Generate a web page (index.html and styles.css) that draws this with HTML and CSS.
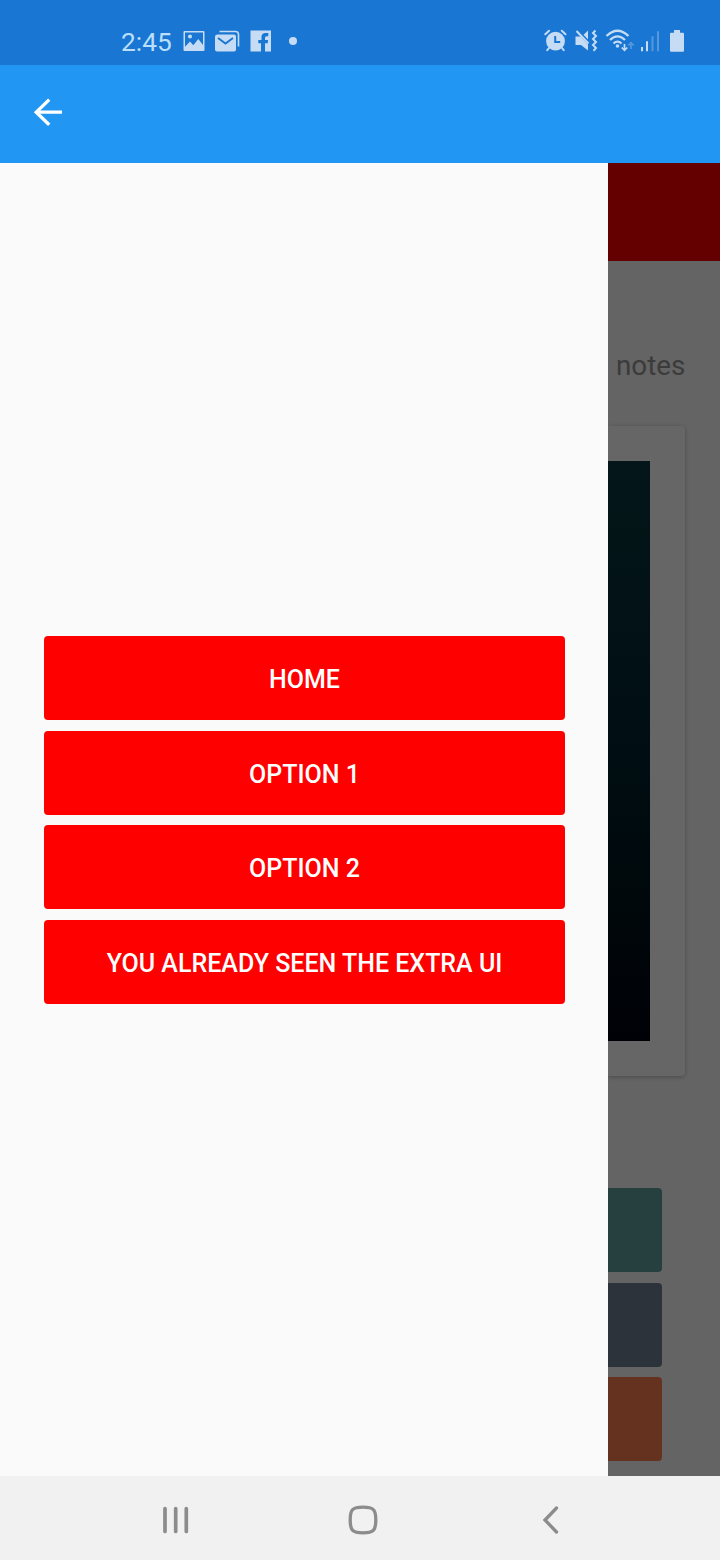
FILE: index.html
```html
<!DOCTYPE html>
<html lang="en">
<head>
<meta charset="utf-8">
<meta name="viewport" content="width=device-width, initial-scale=1">
<title>Menu</title>
<link rel="stylesheet" href="styles.css">
</head>
<body>
<div class="screen">
  <header class="status">
    <div class="status-left">
      <span class="clock">2:45</span>
      <svg class="icon" width="22" height="22" viewBox="0 0 22 22"><path fill="currentColor" fill-rule="evenodd" d="M1.500 1h19q1 0 1 1v18q0 1-1 1h-19q-1 0-1-1V2q0-1 1-1zM2 2.500v14.200l5-5.200 3.300 3.700 5-6.200 4.700 6V2.500zM7 4.600a2 2 0 1 1 0 4a2 2 0 1 1 0-4z"/></svg>
      <svg class="icon" width="25" height="22" viewBox="0 0 25 22"><path fill="currentColor" d="M2.500 4.500h16.500q2 0 2 2v13q0 2-2 2h-17q-2 0-2-2v-13q0-2 2.500-2z"/><path fill="none" stroke="currentColor" stroke-width="1.600" d="M4.500 1.500H20.500q3 0 3 3V16.500"/><path fill="none" stroke="#1976d2" stroke-width="1.900" d="M3 8l7.500 5.500L18 8"/></svg>
      <svg class="icon" width="21" height="22" viewBox="0 0 21 22"><path fill="currentColor" fill-rule="evenodd" d="M.5 .5h20.500v21h-6v-8.300h2.700l.4-3.200h-3.100V7.800q0-1.500 1.500-1.500h1.800V3h-2.500q-4.300 0-4.300 4v3H8.300v3.200h2.700v8.300H.5z"/></svg>
      <span class="dot"></span>
    </div>
    <div class="status-right">
      <svg class="icon" width="24" height="24" viewBox="0 0 24 24"><path fill="currentColor" fill-rule="evenodd" d="M11.500 2.800a9.400 9.400 0 1 1 0 18.800a9.400 9.400 0 1 1 0-18.800zM10.200 7v7h6v-1.900h-4V7z"/><path fill="none" stroke="currentColor" stroke-width="2" stroke-linecap="round" d="M1.300 5.200l3.700-3.400M21.500 5.200l-3.700-3.400M5 19l-1.700 2.200M18 19l1.700 2.200"/></svg>
      <svg class="icon" width="24" height="24" viewBox="0 0 24 24"><path fill="currentColor" d="M.5 7.500h5l7.500 8v6L6 16H.5zM13 1.500v9L8.500 5.800z"/><path fill="none" stroke="currentColor" stroke-width="2" d="M1.500 2l12 12.500M20.500 1.500l-2.500 2.500 3 3-3 3 3 3-3 3 3 3-2.500 2.800"/></svg>
      <svg class="icon wifi" width="30" height="24" viewBox="0 0 30 24"><path fill="none" stroke="currentColor" stroke-width="2.300" d="M1.500 7Q12.500-3.500 23.500 7M5 11Q12.500 3.800 20 11M8.500 14.500Q12.500 10.800 16.500 14.500"/><circle fill="currentColor" cx="12.500" cy="17" r="1.800"/><path fill="none" stroke="currentColor" stroke-width="1.700" d="M19.500 15v6.500M16.700 18.500l2.800 2.900 2.800-2.900"/><path class="faded" fill="none" stroke="currentColor" stroke-width="1.700" d="M26 20v-6.500M23.200 16.500l2.800-2.900 2.800 2.900"/></svg>
      <svg class="icon signal" width="20" height="24" viewBox="0 0 20 24"><path fill="currentColor" d="M1 18h2v4.300H1zM6 12.300h2v10H6z"/><path class="faded" fill="currentColor" d="M11.500 7.300h2v15h-2zM17 2.300h2v20h-2z"/></svg>
      <svg class="icon" width="14" height="24" viewBox="0 0 14 24"><path fill="currentColor" d="M4 1h6v2.700h3q1 0 1 1v17q0 1-1 1H1q-1 0-1-1v-17q0-1 1-1h3z"/></svg>
    </div>
  </header>
  <div class="appbar">
    <svg class="back" width="30" height="30" viewBox="0 0 30 30"><path fill="none" stroke="currentColor" stroke-width="3.300" d="M29 15.200H4M16.200 2.600L3.200 15.200l13 12.600"/></svg>
  </div>
  <main class="body">
    <nav class="drawer">
      <button class="option">HOME</button>
      <button class="option">OPTION 1</button>
      <button class="option">OPTION 2</button>
      <button class="option">YOU ALREADY SEEN THE EXTRA UI</button>
    </nav>
    <section class="page">
      <div class="page-bar"></div>
      <p class="page-text">notes</p>
      <div class="card"><div class="picture"></div></div>
      <div class="tiles">
        <div class="tile teal"></div>
        <div class="tile slate"></div>
        <div class="tile rust"></div>
      </div>
    </section>
  </main>
  <footer class="navbar">
    <svg class="nav-recent" width="26" height="28" viewBox="0 0 26 28"><path fill="none" stroke="currentColor" stroke-width="3.700" stroke-linecap="round" d="M2 2.500v23M12.700 2.500v23M23.300 2.500v23"/></svg>
    <svg class="nav-home" width="30" height="30" viewBox="0 0 30 30"><path fill="none" stroke="currentColor" stroke-width="3.300" d="M15 2.200C25.500 2.200 27.800 4.500 27.800 15S25.500 27.800 15 27.800 2.200 25.500 2.200 15 4.500 2.200 15 2.200z"/></svg>
    <svg class="nav-back" width="18" height="28" viewBox="0 0 18 28"><path fill="none" stroke="currentColor" stroke-width="3.300" stroke-linecap="round" d="M14.500 2L3 14l11.500 12"/></svg>
  </footer>
</div>
</body>
</html>
```

FILE: styles.css
```css
* {
  box-sizing: border-box;
}

body {
  margin: 0;
  font-family: Roboto, "Noto Sans", sans-serif;
}

.screen {
  display: flex;
  flex-direction: column;
  width: 720px;
  height: 1560px;
  overflow: hidden;
}

svg {
  display: block;
  flex: none;
}

.status {
  display: flex;
  justify-content: space-between;
  height: 65px;
  padding: 29px 36px 0 121px;
  background: #1976d2;
  color: #c5dcf4;
}

.status-left,
.status-right {
  display: flex;
  align-items: center;
  height: 24px;
}

.status-left {
  gap: 10px;
}

.clock {
  width: 52px;
  padding-top: 2px;
  font-size: 26.3px;
  line-height: 26px;
  color: #bbdefb;
}

.dot {
  width: 8px;
  height: 8px;
  margin-left: 8px;
  border-radius: 50%;
  background: currentColor;
}

.status-right {
  gap: 7px;
}

.wifi {
  margin-left: -1px;
}

.signal {
  margin: 0 3px 0 -2px;
}

.faded {
  opacity: 0.35;
}

.appbar {
  display: flex;
  height: 98px;
  padding: 32px 33px 0;
  background: #2196f3;
  color: #fff;
}

.body {
  display: flex;
  height: 1313px;
}

.drawer {
  display: flex;
  flex-direction: column;
  justify-content: center;
  gap: 10.667px;
  width: 608px;
  padding: 0.8px 43px 0 44px;
  background: #fafafa;
}

.option {
  height: 84px;
  padding: 4px 0 0;
  border: 0;
  border-radius: 4px;
  background: #f00;
  color: #fff;
  font: 500 25px/30px Roboto, "Noto Sans", sans-serif;
}

.page {
  width: 112px;
  background: #646464;
  overflow: hidden;
}

.page-bar {
  height: 98px;
  background: #640000;
}

.page-text {
  height: 165px;
  margin: 0;
  padding: 88px 0 0 8px;
  font-size: 27.8px;
  line-height: 34px;
  color: #3b3b3b;
}

.card {
  width: 77px;
  height: 650px;
  padding-top: 35px;
  border-radius: 0 4px 4px 0;
  background: #666;
  box-shadow: 0 1px 4px rgba(0, 0, 0, 0.25);
}

.picture {
  width: 42px;
  height: 580px;
  background: linear-gradient(#041619, #000e13 50%, #00080b 75%, #000106);
}

.tiles {
  display: flex;
  flex-direction: column;
  gap: 10.5px;
  width: 54px;
  padding-top: 112px;
}

.tile {
  height: 84px;
  border-radius: 0 4px 4px 0;
}

.teal {
  background: #264040;
}

.slate {
  background: #2d333a;
}

.rust {
  background: #663220;
}

.navbar {
  display: flex;
  align-items: center;
  height: 84px;
  padding: 3px 0 0 163px;
  background: #f1f1f1;
  color: #8c8c8c;
}

.nav-home {
  margin-left: 158.500px;
}

.nav-back {
  margin-left: 164px;
}
```
